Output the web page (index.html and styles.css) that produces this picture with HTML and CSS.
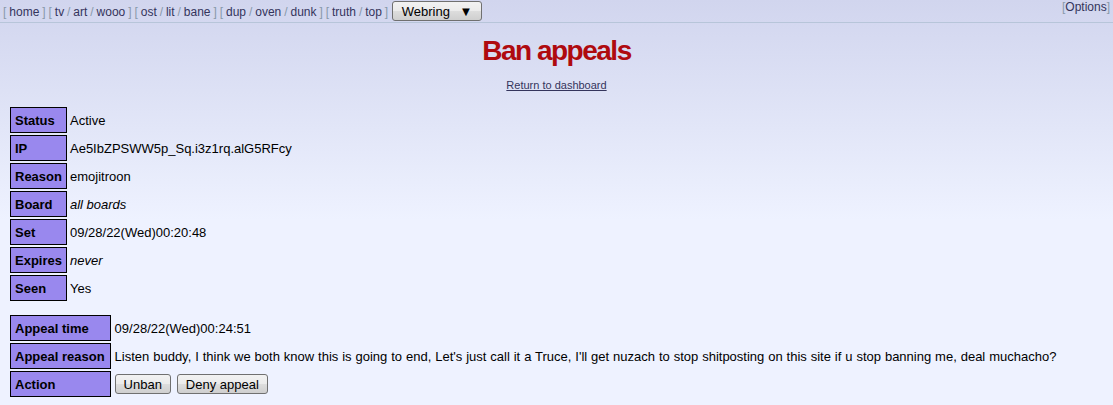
FILE: index.html
```html
<!DOCTYPE html>
<html>
<head>
    <title>Ban appeals</title>
    <meta charset="UTF-8">
    <link rel="stylesheet" href="styles.css">
</head>
<body>
    <div class="topbar">
        <div class="boardlist">
            [ <a href="#">home</a> ]
            [ <a href="#">tv</a> / <a href="#">art</a> / <a href="#">wooo</a> ]
            [ <a href="#">ost</a> / <a href="#">lit</a> / <a href="#">bane</a> ]
            [ <a href="#">dup</a> / <a href="#">oven</a> / <a href="#">dunk</a> ]
            [ <a href="#">truth</a> / <a href="#">top</a> ]
            <button class="webring">Webring &#9660;</button>
        </div>
        <div class="options">[<a href="#">Options</a>]</div>
    </div>

    <h1>Ban appeals</h1>
    <div class="back"><a href="#">Return to dashboard</a></div>

    <table class="ban">
        <tr><th>Status</th><td>Active</td></tr>
        <tr><th>IP</th><td>Ae5IbZPSWW5p_Sq.i3z1rq.alG5RFcy</td></tr>
        <tr><th>Reason</th><td>emojitroon</td></tr>
        <tr><th>Board</th><td><em>all boards</em></td></tr>
        <tr><th>Set</th><td>09/28/22(Wed)00:20:48</td></tr>
        <tr><th>Expires</th><td><em>never</em></td></tr>
        <tr><th>Seen</th><td>Yes</td></tr>
    </table>

    <table class="ban appeal">
        <tr><th>Appeal time</th><td>09/28/22(Wed)00:24:51</td></tr>
        <tr><th>Appeal reason</th><td>Listen buddy, I think we both know this is going to end, Let's just call it a Truce, I'll get nuzach to stop shitposting on this site if u stop banning me, deal muchacho?</td></tr>
        <tr><th>Action</th><td>
            <button class="btn">Unban</button>
            <button class="btn">Deny appeal</button>
        </td></tr>
    </table>
</body>
</html>
```

FILE: styles.css
```css
body {
    margin: 0;
    padding: 0 8px;
    font-family: "Liberation Sans", Arial, sans-serif;
    font-size: 13px;
    color: #000;
    background: #eef2ff linear-gradient(to bottom, #d1d5ee 0px, #eef2ff 220px) no-repeat;
    min-height: 405px;
}
a {
    color: #34345c;
}
.topbar {
    display: flex;
    justify-content: space-between;
    align-items: center;
    height: 22px;
    margin: 0 -8px;
    padding: 0 3px 0 3px;
    border-bottom: 1px solid #b7c5d9;
    font-size: 12px;
    color: #89a;
}
.boardlist {
    word-spacing: -0.4px;
}
.topbar a {
    text-decoration: none;
    color: #34345c;
}
.options {
    align-self: flex-start;
    color: #89a;
}
.options a {
    color: #34345c;
}
.webring {
    font-family: "Liberation Sans", Arial, sans-serif;
    font-size: 13px;
    color: #000;
    height: 20px;
    width: 90px;
    margin-left: 1px;
    padding: 0;
    border: 1px solid #707070;
    border-radius: 3px;
    background: linear-gradient(to bottom, #f2f2f2 0%, #ebebeb 50%, #dddddd 51%, #cfcfcf 100%);
    word-spacing: 6px;
}
h1 {
    margin: 12px 0 0;
    text-align: center;
    font-family: "Liberation Sans", Arial, sans-serif;
    font-size: 28px;
    font-weight: bold;
    letter-spacing: -1.5px;
    color: #af0a0f;
    line-height: 32px;
}
.back {
    text-align: center;
    font-size: 11px;
    margin-top: 12px;
}
.ban {
    border-spacing: 2px;
    margin-top: 14px;
}
.ban th {
    background: #9988ee;
    border: 1px solid #000;
    text-align: left;
    padding: 0 4px;
    height: 24px;
    min-width: 44px;
    font-weight: bold;
    white-space: nowrap;
}
.ban td {
    padding: 0 1px;
    white-space: nowrap;
}
.appeal {
    margin-top: 10px;
}
.appeal th {
    padding-right: 5px;
}
.appeal td {
    word-spacing: 0.3px;
    padding-left: 2px;
}
.btn {
    font-family: "Liberation Sans", Arial, sans-serif;
    font-size: 13px;
    color: #000;
    height: 20px;
    padding: 0 8px;
    margin-right: 2px;
    border: 1px solid #707070;
    border-radius: 3px;
    background: linear-gradient(to bottom, #f2f2f2 0%, #ebebeb 50%, #dddddd 51%, #cfcfcf 100%);
}
```
